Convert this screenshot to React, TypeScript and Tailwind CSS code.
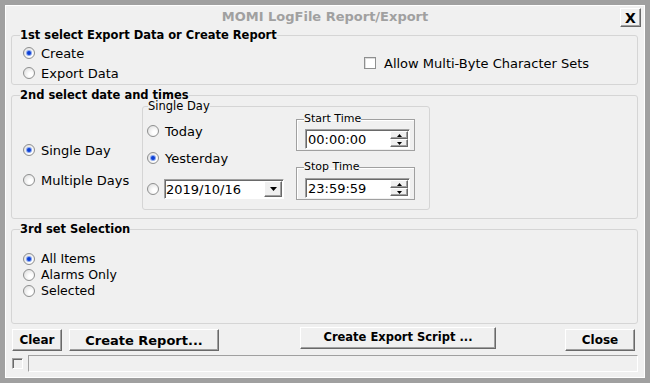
import React from "react";

const Radio = ({ checked = false }: { checked?: boolean }) => (
  <span className="flex h-[12px] w-[12px] shrink-0 items-center justify-center rounded-full border border-[#8e8f8f] bg-[radial-gradient(circle_at_65%_65%,#ffffff_20%,#d8d8d8)]">
    {checked && <span className="h-[4px] w-[4px] rounded-full bg-[#0b3fd4] shadow-[0_0_0_1px_#8aa6ee]" />}
  </span>
);

const RadioRow = ({ label, checked = false, h = "h-[20px]", size = "text-[13px]" }: { label: string; checked?: boolean; h?: string; size?: string }) => (
  <div className={`flex ${h} items-center gap-[6px] pl-[3px] ${size}`}>
    <Radio checked={checked} />
    <span className="leading-none">{label}</span>
  </div>
);

const raised =
  "border border-t-white border-l-white border-r-[#696969] border-b-[#696969] shadow-[inset_-1px_-1px_0_#a0a0a0] bg-[#f0f0f0]";
const sunken =
  "border border-t-[#a0a0a0] border-l-[#a0a0a0] border-r-white border-b-white shadow-[inset_1px_1px_0_#696969]";

const UpArrow = () => (
  <svg width="5" height="3" viewBox="0 0 5 3">
    <path d="M2.5 0 L5 3 L0 3 Z" fill="#000" />
  </svg>
);
const DownArrow = ({ w = 5, h = 3 }: { w?: number; h?: number }) => (
  <svg width={w} height={h} viewBox={`0 0 ${w} ${h}`}>
    <path d={`M0 0 L${w} 0 L${w / 2} ${h} Z`} fill="#000" />
  </svg>
);

const TimeBox = ({ value }: { value: string }) => (
  <div className={`flex h-[20px] w-[105px] items-center bg-white ${sunken}`}>
    <span className="ml-[2px] text-[13px] leading-none">{value}</span>
    <div className="ml-auto mr-[1px] flex flex-col">
      <div className={`flex h-[8px] w-[18px] items-center justify-center ${raised}`}>
        <UpArrow />
      </div>
      <div className={`flex h-[8px] w-[18px] items-center justify-center ${raised}`}>
        <DownArrow />
      </div>
    </div>
  </div>
);

const TimeGroup = ({ title, value, cls, inputCls }: { title: string; value: string; cls: string; inputCls: string }) => (
  <fieldset className={`w-[119px] border border-[#a0a0a0] pl-[8px] pr-[3px] pb-[1px] shadow-[inset_1px_1px_0_#ffffff] ${cls}`}>
    <legend className="-ml-[1px] text-[11px] leading-[14px]">{title}</legend>
    <div className={inputCls}>
      <TimeBox value={value} />
    </div>
  </fieldset>
);

export default function App() {
  return (
    <div className="h-[383px] w-[650px] bg-[#a0a0a0] p-[5px] font-['DejaVu_Sans',sans-serif] text-black">
      <div className="flex h-full flex-col border border-white bg-[#f0f0f0]">
        {/* title row */}
        <div className="grid h-[21px] grid-cols-[1fr_auto_1fr]">
          <div />
          <div className="self-center text-[13px] font-bold leading-none text-[#a0a0a0]">MOMI LogFile Report/Export</div>
          <div className="flex justify-end pt-[2px] pr-[3px]">
            <div className={`flex h-[19px] w-[21px] items-center justify-center text-[14px] font-bold leading-none ${raised}`}>X</div>
          </div>
        </div>

        {/* group 1 */}
        <fieldset className="ml-[5px] mr-[6px] rounded-[3px] border border-[#d5d5d5] px-[8px] pb-[1px]">
          <legend className="text-[11.5px] font-bold leading-[16px]">1st select Export Data or Create Report</legend>
          <div className="flex">
            <div className="flex w-[344px] flex-col">
              <RadioRow label="Create" checked />
              <RadioRow label="Export Data" />
            </div>
            <div className="flex items-center gap-[8px] text-[13px]">
              <span className="h-[12px] w-[12px] border border-[#8e8f8f] bg-white shadow-[inset_1px_1px_0_#dcdcdc]" />
              <span className="leading-none">Allow Multi-Byte Character Sets</span>
            </div>
          </div>
        </fieldset>

        {/* group 2 */}
        <fieldset className="ml-[5px] mr-[6px] mt-[4px] rounded-[3px] border border-[#d5d5d5] px-[8px]">
          <legend className="text-[11.5px] font-bold leading-[12px]">2nd select date and times</legend>
          <div className="flex h-[117px]">
            <div className="flex w-[122px] flex-col">
              <div className="mt-[39px]">
                <RadioRow label="Single Day" checked />
              </div>
              <div className="mt-[10px]">
                <RadioRow label="Multiple Days" />
              </div>
            </div>
            <fieldset className="h-[109px] w-[288px] rounded-[3px] border border-[#d5d5d5] px-[5px]">
              <legend className="text-[11.5px] leading-[10px]">Single Day</legend>
              <div className="flex">
                <div className="-ml-[1px] flex w-[149px] flex-col">
                  <div className="mt-[10px] flex h-[20px] items-center gap-[6px] text-[13px]">
                    <Radio />
                    <span className="leading-none">Today</span>
                  </div>
                  <div className="mt-[7px] flex h-[20px] items-center gap-[6px] text-[13px]">
                    <Radio checked />
                    <span className="leading-none">Yesterday</span>
                  </div>
                  <div className="mt-[11px] flex h-[20px] items-center">
                    <Radio />
                    <div className={`ml-[5px] flex h-[20px] w-[120px] items-center bg-white ${sunken}`}>
                      <span className="ml-[1px] text-[13px] leading-none">2019/10/16</span>
                      <div className={`ml-auto mr-[1px] flex h-[16px] w-[18px] items-center justify-center ${raised}`}>
                        <DownArrow w={7} h={4} />
                      </div>
                    </div>
                  </div>
                </div>
                <div className="flex flex-col">
                  <TimeGroup title="Start Time" value="00:00:00" cls="mt-[1px]" inputCls="mt-[3px]" />
                  <TimeGroup title="Stop Time" value="23:59:59" cls="mt-[9px]" inputCls="mt-[4px]" />
                </div>
              </div>
            </fieldset>
          </div>
        </fieldset>

        {/* group 3 */}
        <fieldset className="ml-[5px] mr-[6px] mt-[2px] rounded-[3px] border border-[#d5d5d5] px-[8px] pb-[24px]">
          <legend className="text-[11.5px] font-bold leading-[16px]">3rd set Selection</legend>
          <div className="mt-[14px] flex flex-col">
            <RadioRow label="All Items" checked h="h-[16px]" size="text-[12.5px]" />
            <RadioRow label="Alarms Only" h="h-[16px]" size="text-[12.5px]" />
            <RadioRow label="Selected" h="h-[16px]" size="text-[12.5px]" />
          </div>
        </fieldset>

        {/* buttons */}
        <div className="mt-[3px] flex h-[24px] items-start">
          <div className={`ml-[6px] mt-[2px] flex h-[22px] w-[50px] items-center justify-center text-[12px] font-bold leading-none ${raised}`}>Clear</div>
          <div className={`ml-[7px] mt-[2px] flex h-[22px] w-[150px] items-center justify-center text-[13px] font-bold leading-none ${raised}`}>Create Report...</div>
          <div className={`ml-[81px] flex h-[22px] w-[196px] items-center justify-center text-[11.5px] font-bold leading-none ${raised}`}>Create Export Script ...</div>
          <div className={`ml-[69px] mt-[2px] flex h-[22px] w-[70px] items-center justify-center text-[12px] font-bold leading-none ${raised}`}>Close</div>
        </div>

        {/* status */}
        <div className="mt-[4px] flex h-[17px] items-center">
          <span className={`ml-[6px] h-[11px] w-[11px] bg-[#f0f0f0] ${sunken}`} />
          <div className={`ml-[5px] h-[17px] w-[610px] bg-[#f0f0f0] border border-t-[#a0a0a0] border-l-[#a0a0a0] border-r-white border-b-white`} />
        </div>
      </div>
    </div>
  );
}
